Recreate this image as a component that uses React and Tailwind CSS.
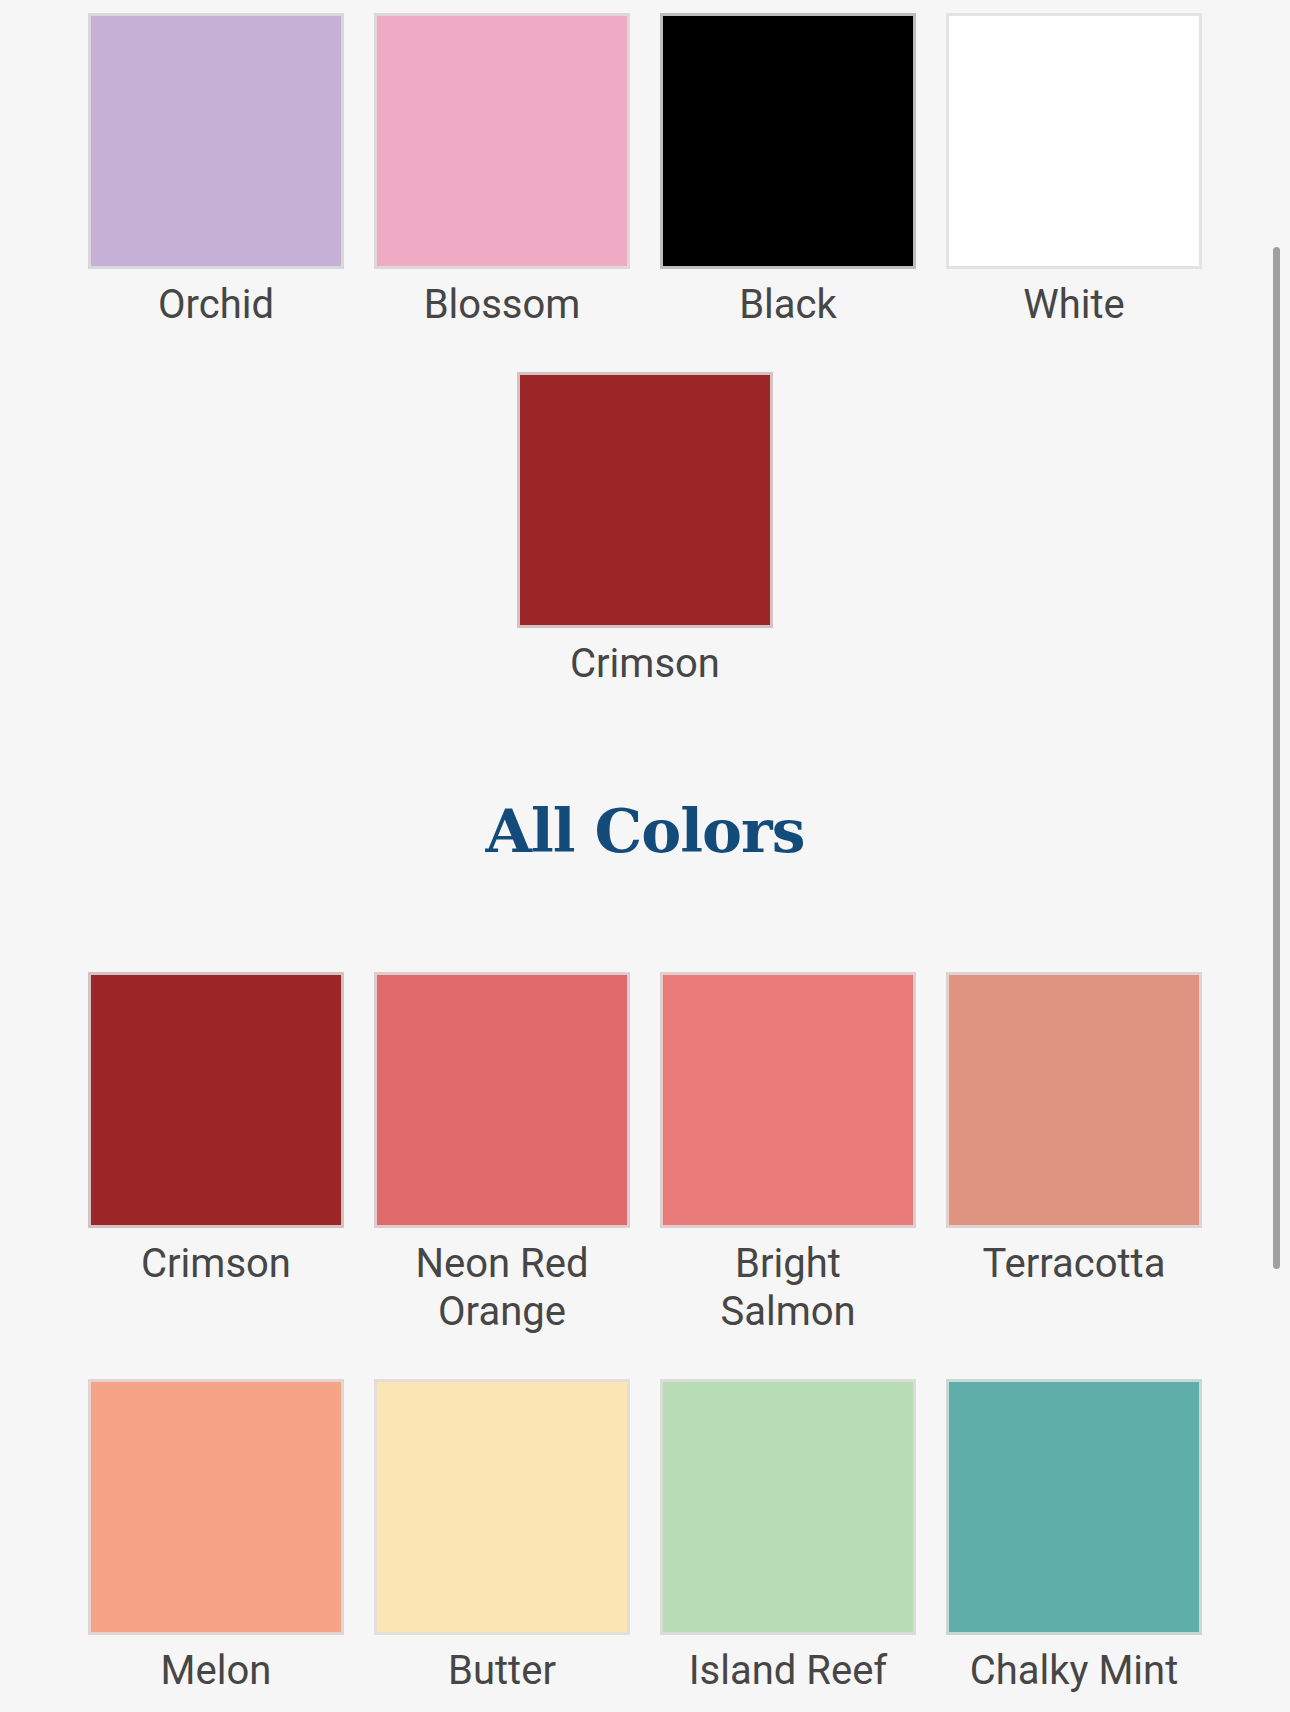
const featured = [
  { name: ["Orchid"], color: "bg-[#c5b1d5]" },
  { name: ["Blossom"], color: "bg-[#efabc3]" },
  { name: ["Black"], color: "bg-[#000000]" },
  { name: ["White"], color: "bg-[#ffffff]" },
  { name: ["Crimson"], color: "bg-[#9c2527]" },
];

const all = [
  { name: ["Crimson"], color: "bg-[#9c2527]" },
  { name: ["Neon Red", "Orange"], color: "bg-[#e06b6c]" },
  { name: ["Bright", "Salmon"], color: "bg-[#e87a7a]" },
  { name: ["Terracotta"], color: "bg-[#df9482]" },
  { name: ["Melon"], color: "bg-[#f5a487]" },
  { name: ["Butter"], color: "bg-[#fce5b5]" },
  { name: ["Island Reef"], color: "bg-[#b8dcb6]" },
  { name: ["Chalky Mint"], color: "bg-[#5faea9]" },
];

function Swatch({ item }) {
  return (
    <div className="flex w-[256px] flex-col items-center">
      <div
        className={`h-[256px] w-[256px] border-[3px] border-[#dedede]/85 ${item.color}`}
      />
      <div className="mt-3 text-center text-[40px] leading-[48px] text-[#464646] [font-family:Roboto,'Liberation_Sans',sans-serif]">
        {item.name.map((l, i) => (
          <div key={i}>{l}</div>
        ))}
      </div>
    </div>
  );
}

export default function App() {
  return (
    <div className="relative min-h-[1712px] w-full bg-[#f6f6f6] pt-[13px]">
      <div className="mx-auto flex w-[1116px] flex-wrap justify-center gap-x-[30px] gap-y-[43px]">
        {featured.map((it, i) => (
          <Swatch key={i} item={it} />
        ))}
      </div>

      <h2 className="mt-[103px] text-center text-[60px] font-bold leading-[80px] tracking-[-1px] text-[#134c7b] [font-family:'DejaVu_Serif',serif]">
        All Colors
      </h2>

      <div className="mx-auto mt-[101px] flex w-[1116px] flex-wrap justify-center gap-x-[30px] gap-y-[43px]">
        {all.map((it, i) => (
          <Swatch key={i} item={it} />
        ))}
      </div>

      <div className="absolute right-[10px] top-[247px] h-[1022px] w-[7px] rounded-full bg-[#a0a0a0]" />
    </div>
  );
}
